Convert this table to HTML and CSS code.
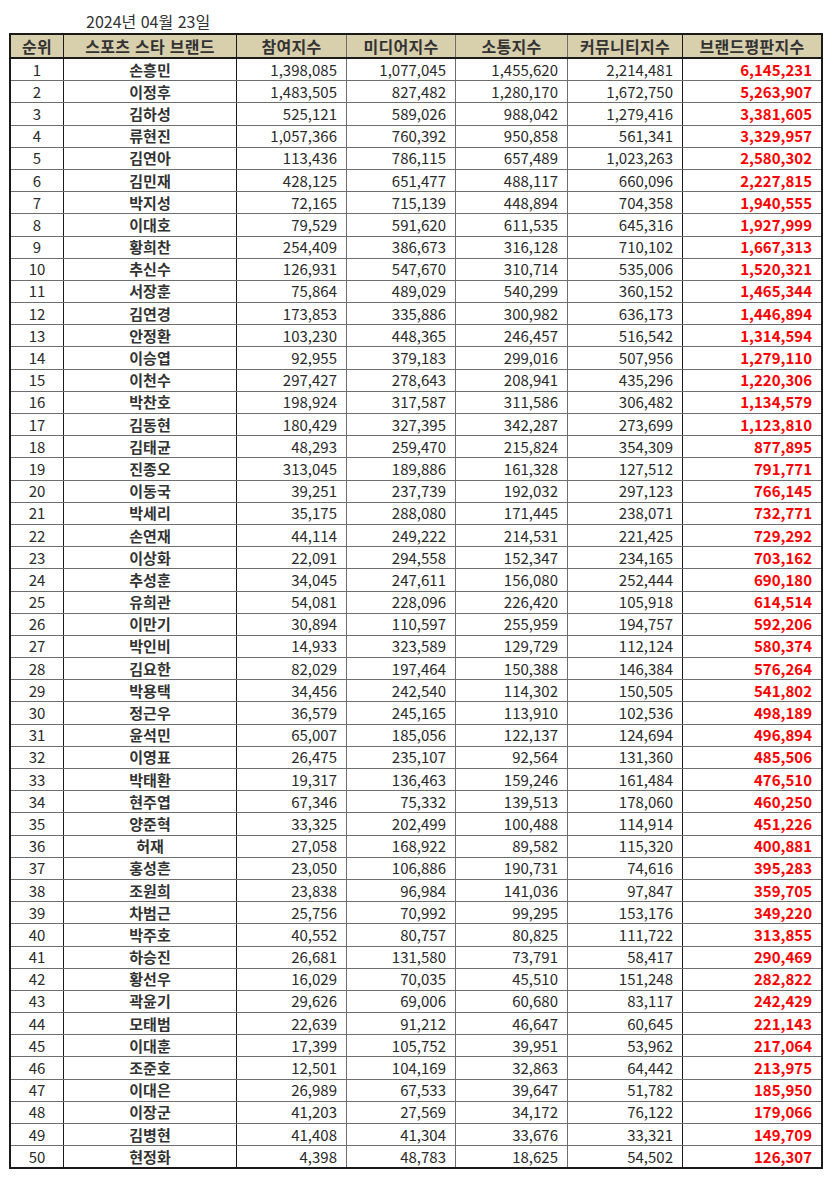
FILE: index.html
```html
<!DOCTYPE html>
<html lang="ko">
<head>
<meta charset="utf-8">
<link rel="stylesheet" href="styles.css">
</head>
<body>
<div class="page">
  <div class="date">2024년 04월 23일</div>
  <table class="rank">
    <thead>
      <tr>
        <th class="c1">순위</th>
        <th class="c2">스포츠 스타 브랜드</th>
        <th class="c3">참여지수</th>
        <th class="c4">미디어지수</th>
        <th class="c5">소통지수</th>
        <th class="c6">커뮤니티지수</th>
        <th class="c7">브랜드평판지수</th>
      </tr>
    </thead>
    <tbody id="rows"></tbody>
  </table>
</div>
<script src="app.js"></script>
</body>
</html>
```

FILE: app.js
```js
var data = [
["손흥민","1,398,085","1,077,045","1,455,620","2,214,481","6,145,231"],
["이정후","1,483,505","827,482","1,280,170","1,672,750","5,263,907"],
["김하성","525,121","589,026","988,042","1,279,416","3,381,605"],
["류현진","1,057,366","760,392","950,858","561,341","3,329,957"],
["김연아","113,436","786,115","657,489","1,023,263","2,580,302"],
["김민재","428,125","651,477","488,117","660,096","2,227,815"],
["박지성","72,165","715,139","448,894","704,358","1,940,555"],
["이대호","79,529","591,620","611,535","645,316","1,927,999"],
["황희찬","254,409","386,673","316,128","710,102","1,667,313"],
["추신수","126,931","547,670","310,714","535,006","1,520,321"],
["서장훈","75,864","489,029","540,299","360,152","1,465,344"],
["김연경","173,853","335,886","300,982","636,173","1,446,894"],
["안정환","103,230","448,365","246,457","516,542","1,314,594"],
["이승엽","92,955","379,183","299,016","507,956","1,279,110"],
["이천수","297,427","278,643","208,941","435,296","1,220,306"],
["박찬호","198,924","317,587","311,586","306,482","1,134,579"],
["김동현","180,429","327,395","342,287","273,699","1,123,810"],
["김태균","48,293","259,470","215,824","354,309","877,895"],
["진종오","313,045","189,886","161,328","127,512","791,771"],
["이동국","39,251","237,739","192,032","297,123","766,145"],
["박세리","35,175","288,080","171,445","238,071","732,771"],
["손연재","44,114","249,222","214,531","221,425","729,292"],
["이상화","22,091","294,558","152,347","234,165","703,162"],
["추성훈","34,045","247,611","156,080","252,444","690,180"],
["유희관","54,081","228,096","226,420","105,918","614,514"],
["이만기","30,894","110,597","255,959","194,757","592,206"],
["박인비","14,933","323,589","129,729","112,124","580,374"],
["김요한","82,029","197,464","150,388","146,384","576,264"],
["박용택","34,456","242,540","114,302","150,505","541,802"],
["정근우","36,579","245,165","113,910","102,536","498,189"],
["윤석민","65,007","185,056","122,137","124,694","496,894"],
["이영표","26,475","235,107","92,564","131,360","485,506"],
["박태환","19,317","136,463","159,246","161,484","476,510"],
["현주엽","67,346","75,332","139,513","178,060","460,250"],
["양준혁","33,325","202,499","100,488","114,914","451,226"],
["허재","27,058","168,922","89,582","115,320","400,881"],
["홍성흔","23,050","106,886","190,731","74,616","395,283"],
["조원희","23,838","96,984","141,036","97,847","359,705"],
["차범근","25,756","70,992","99,295","153,176","349,220"],
["박주호","40,552","80,757","80,825","111,722","313,855"],
["하승진","26,681","131,580","73,791","58,417","290,469"],
["황선우","16,029","70,035","45,510","151,248","282,822"],
["곽윤기","29,626","69,006","60,680","83,117","242,429"],
["모태범","22,639","91,212","46,647","60,645","221,143"],
["이대훈","17,399","105,752","39,951","53,962","217,064"],
["조준호","12,501","104,169","32,863","64,442","213,975"],
["이대은","26,989","67,533","39,647","51,782","185,950"],
["이장군","41,203","27,569","34,172","76,122","179,066"],
["김병현","41,408","41,304","33,676","33,321","149,709"],
["현정화","4,398","48,783","18,625","54,502","126,307"]
];
var tb = document.getElementById("rows");
var html = "";
for (var i = 0; i < data.length; i++) {
  var d = data[i];
  html += '<tr><td class="c1">' + (i + 1) + '</td><td class="c2">' + d[0] +
    '</td><td class="c3 num">' + d[1] + '</td><td class="c4 num">' + d[2] +
    '</td><td class="c5 num">' + d[3] + '</td><td class="c6 num">' + d[4] +
    '</td><td class="c7 num total">' + d[5] + '</td></tr>';
}
tb.innerHTML = html;
```

FILE: styles.css
```css
html, body {
  margin: 0;
  padding: 0;
  background: #ffffff;
}
.page {
  padding: 9px 8px 0 9px;
  font-family: "Noto Sans CJK KR", "Noto Sans", sans-serif;
  color: #2b2b2b;
}
.date {
  height: 24px;
  line-height: 24px;
  padding-left: 77px;
  font-size: 16px;
  color: #333;
}
.rank {
  border-collapse: collapse;
  table-layout: fixed;
  width: 813px;
  border: 2px solid #1a1a1a;
}
.rank th, .rank td {
  padding: 0;
  border: 1px solid #6e6e6e;
  font-size: 15px;
  line-height: 20px;
  white-space: nowrap;
  overflow: hidden;
}
.rank th {
  height: 22px;
  background: #d8cfac;
  font-weight: bold;
  font-size: 16px;
  letter-spacing: 0.3px;
  color: #333;
  text-align: center;
  border-bottom: 2px solid #1a1a1a;
}
.rank td {
  height: 21.2px;
  color: #2b2b2b;
}
.rank .c1 { width: 52px; text-align: center; border-right: 1.5px solid #1a1a1a; }
.rank .c2 { width: 172px; text-align: center; border-right: 1.5px solid #1a1a1a; }
.rank td.c2 { font-weight: bold; color: #333; }
.rank .c3 { width: 109px; }
.rank .c4 { width: 108px; }
.rank .c5 { width: 111px; }
.rank .c6 { width: 114px; border-right: 1.5px solid #1a1a1a; }
.rank .c7 { width: 138px; }
.rank td.num {
  text-align: right;
  padding-right: 9px;
}
.rank td.total {
  color: #ff0000;
  font-weight: bold;
}
```
